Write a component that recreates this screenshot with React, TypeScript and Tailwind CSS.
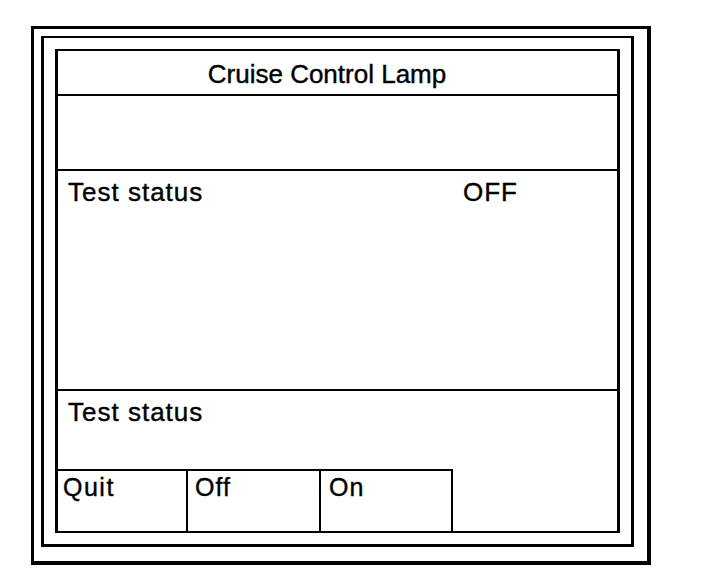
import React from "react";

export default function App() {
  const font = { fontFamily: '"Liberation Sans", Arial, sans-serif' };
  return (
    <div className="w-[704px] h-[588px] bg-white pl-[31px] pt-[26px]" style={font}>
      <div className="inline-block border-black border-l-[3px] border-t-[3px] border-r-4 border-b-4 pl-[7px] pt-[7px] pr-[13px] pb-[14px]">
        <div className="border-black border-l-[3px] border-t-2 border-r-[3px] border-b-[3px] p-[11px]">
          <div className="w-[565px] h-[484px] border-black border-l-[3px] border-r-[3px] border-t-2 border-b-2 flex flex-col text-black text-[26px] leading-[30px] [-webkit-text-stroke:0.4px_black]">
            <div className="h-[45px] border-b-2 border-black flex items-start justify-center pt-[8px] pr-[21px]">
              <span>Cruise Control Lamp</span>
            </div>
            <div className="h-[75px] border-b-2 border-black" />
            <div className="h-[220px] border-b-2 border-black flex pt-[6px] pl-[10px]">
              <span className="w-[395px] tracking-[1px]">Test status</span>
              <span className="tracking-[1px]">OFF</span>
            </div>
            <div className="flex-1 flex flex-col justify-between">
              <div className="pt-[6px] pl-[10px] tracking-[1px]">Test status</div>
              <div className="flex">
                <div className="w-[395px] h-[62px] border-t-2 border-r-2 border-black flex text-[25px]">
                  <div className="w-[130px] border-r-2 border-black pl-[5px] pt-[1px] tracking-[1.5px]">Quit</div>
                  <div className="w-[133px] border-r-2 border-black pl-[7px] pt-[1px] tracking-[1px]">Off</div>
                  <div className="flex-1 pl-[8px] pt-[1px] tracking-[1px]">On</div>
                </div>
              </div>
            </div>
          </div>
        </div>
      </div>
    </div>
  );
}
